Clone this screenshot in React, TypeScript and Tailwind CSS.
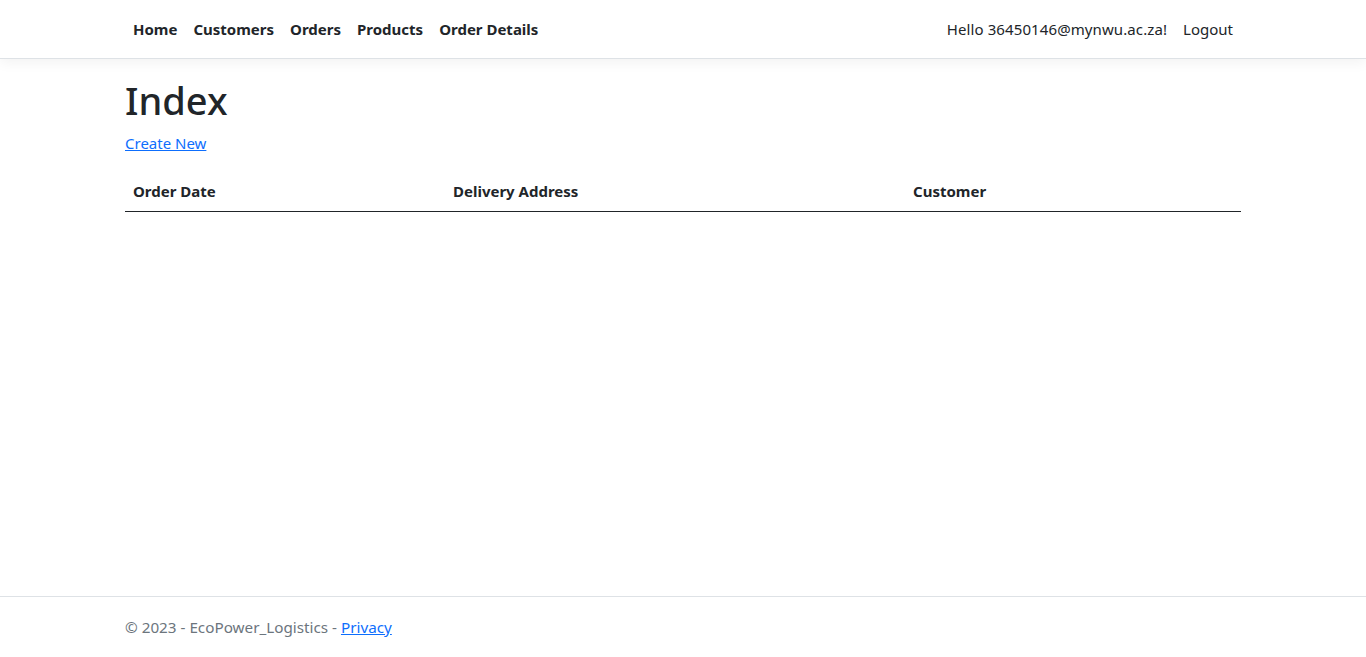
export default function App() {
  const font = { fontFamily: '"Noto Sans", "Open Sans", sans-serif' };
  return (
    <div className="min-h-screen flex flex-col bg-white text-[#212529]" style={font}>
      <header className="border-b border-[#dee2e6] shadow-[0_4px_12px_rgba(0,0,0,0.05)] mb-4">
        <nav className="w-[1140px] mx-auto px-3 h-[58px] flex items-center justify-between">
          <ul className="flex items-center text-[15px] font-bold pt-[1px]">
            <li><a className="block px-2 py-2 text-[#212529]">Home</a></li>
            <li><a className="block px-2 py-2 text-[#212529]">Customers</a></li>
            <li><a className="block px-2 py-2 text-[#212529]">Orders</a></li>
            <li><a className="block px-2 py-2 text-[#212529]">Products</a></li>
            <li><a className="block px-2 py-2 text-[#212529]">Order Details</a></li>
          </ul>
          <ul className="flex items-center text-[15px] pt-[1px]">
            <li><a className="block px-2 py-2 text-[#212529] tracking-[0.1px]">Hello 36450146@mynwu.ac.za!</a></li>
            <li><a className="block px-2 py-2 text-[#212529]">Logout</a></li>
          </ul>
        </nav>
      </header>
      <main className="flex-1 w-[1140px] mx-auto px-3">
        <h1 className="text-[38px] leading-[46px] pt-[2px] font-medium mb-2">Index</h1>
        <p className="mb-4 text-[15px] leading-6">
          <a className="text-[#0d6efd] underline cursor-pointer">Create New</a>
        </p>
        <div className="grid grid-cols-[320px_460px_336px] border-b border-[#212529] text-[15px] font-bold leading-6">
          <div className="p-2">Order Date</div>
          <div className="p-2">Delivery Address</div>
          <div className="p-2">Customer</div>
        </div>
      </main>
      <footer className="border-t border-[#dee2e6] h-[61px]">
        <div className="w-[1140px] mx-auto px-3 leading-[60px] text-[15.25px] text-[#6c757d]">
          © 2023 - EcoPower_Logistics - <a className="text-[#0d6efd] underline">Privacy</a>
        </div>
      </footer>
    </div>
  );
}
